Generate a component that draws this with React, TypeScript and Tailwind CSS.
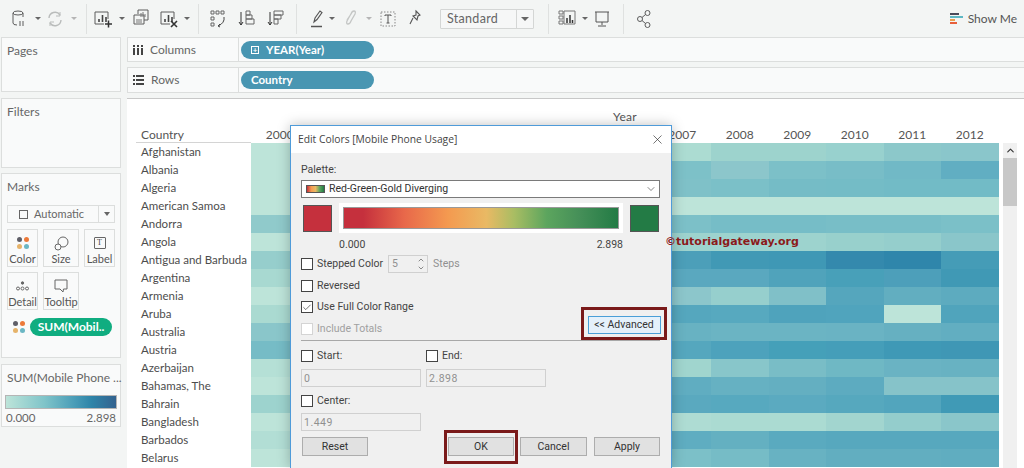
import { X, ChevronDown, ChevronUp, Check } from 'lucide-react';

const rows: [string, string, string[]][] = [
  ['Afghanistan', '#bde4d9', ['#acdcd2', '#9dd3cd', '#9dd3cd', '#98d1ce', '#8cc8ca', '#8ac6cb']],
  ['Albania', '#bde4d9', ['#7dc1c8', '#8cc6cb', '#7cc0c8', '#78bdc7', '#71b9c6', '#61aec2']],
  ['Algeria', '#bde4d9', ['#7fc1c8', '#7bc0c8', '#75bcc6', '#74bcc6', '#72bbc6', '#72bbc6']],
  ['American Samoa', '#bde4d9', ['#bde4d9', '#bde4d9', '#bde4d9', '#bde4d9', '#bde4d9', '#bde4d9']],
  ['Andorra', '#90cacb', ['#7cc0c8', '#76bdc7', '#76bdc7', '#78bec7', '#78bec7', '#7bc0c8']],
  ['Angola', '#bde4d9', ['#9dd3ce', '#9dd3ce', '#9dd3ce', '#98d0cc', '#95cecc', '#8ac6ca']],
  ['Antigua and Barbuda', '#96cecc', ['#4c9fb9', '#4199b5', '#3f98b5', '#3489ad', '#2f86ab', '#459cb7']],
  ['Argentina', '#a8d9d1', ['#5aa8bf', '#5aa8bf', '#50a3bb', '#48a0b9', '#4d9fba', '#4099b5']],
  ['Armenia', '#bde4d9', ['#8cc6cb', '#96cfcd', '#80c0c8', '#55a6bd', '#62aec0', '#5dabbf']],
  ['Aruba', '#aadad1', ['#55a7be', '#57a9bf', '#4fa3bc', '#50a4bd', '#bde4d9', '#50a4bc']],
  ['Australia', '#8ac6ca', ['#68b2c2', '#6bb4c3', '#6bb4c3', '#6ab3c3', '#66b0c1', '#62aec1']],
  ['Austria', '#76bcc6', ['#55a7be', '#4da2bc', '#45a0b9', '#459eb9', '#3f99b6', '#3f97b5']],
  ['Azerbaijan', '#b5e0d6', ['#a0d5ce', '#88c6ca', '#79bdc6', '#6fb8c4', '#6ab3c3', '#68b2c2']],
  ['Bahamas, The', '#bde4d9', ['#60adc1', '#66b1c2', '#64afc1', '#5dabc0', '#86c3c9', '#86c3c9']],
  ['Bahrain', '#9dd3ce', ['#5aa9bf', '#57a9bf', '#5baac0', '#56a8be', '#52a5bd', '#409ab6']],
  ['Bangladesh', '#bde4d9', ['#aedcd3', '#abdbd2', '#abdbd2', '#a2d5cf', '#94cdcc', '#8ac6ca']],
  ['Barbados', '#b2ded5', ['#5fadc1', '#64b0c1', '#5aaabf', '#57a8be', '#57a8be', '#57a8be']],
  ['Belarus', '#bde4d9', ['#7cc0c8', '#76bcc6', '#68b2c2', '#62aec0', '#62aec0', '#60adc0']],
];

// years behind the dialog stay empty
const years = ['2000', '', '', '', '', '', '', '2007', '2008', '2009', '2010', '2011', '2012'];

function Caret({ className = '' }: { className?: string }) {
  return <span className={`w-0 h-0 border-x-[3px] border-x-transparent border-t-[3px] border-t-[#666] ${className}`} />;
}

function Sep({ className = '' }: { className?: string }) {
  return <span className={`w-px h-[30px] bg-[#dfe1e0] ${className}`} />;
}

function Icon({ w, className = '', children }: { w: number; className?: string; children: React.ReactNode }) {
  return (
    <svg width={w} height="20" viewBox={`0 0 ${w} 20`} fill="none" stroke="#5c5c5c" strokeWidth="1" className={className}>
      {children}
    </svg>
  );
}

function ChartBars() {
  return <path d="M5 13V10M8.5 13V6M12 13V8" strokeWidth="1.6" stroke="#444" />;
}

function Toolbar() {
  return (
    <div className="h-[37px] shrink-0 flex items-center">
      <Icon w={14} className="ml-[12px]">
        <ellipse cx="6" cy="4" rx="5" ry="2" />
        <path d="M1 4v10q0 2 4 2M11 4v4M8 12v5M11 12v5" />
      </Icon>
      <Caret className="ml-[9px]" />
      <Icon w={16} className="ml-[6px]">
        <path d="M2 9a6 6 0 0 1 11-3M14 11a6 6 0 0 1-11 3" stroke="#b9bcbb" strokeWidth="1.4" />
        <path d="M13 3v4h-4M3 17v-4h4" stroke="#b9bcbb" />
      </Icon>
      <Caret className="ml-[8px] border-t-[#b5b5b5]" />
      <Sep className="ml-[9px]" />
      <Icon w={19} className="ml-[7px]">
        <path d="M10 15H1V3h13v7" />
        <ChartBars />
        <path d="M11 15h7M14.5 11.500v7" stroke="#333" strokeWidth="1.5" />
      </Icon>
      <Caret className="ml-[6px]" />
      <Icon w={16} className="ml-[8px]">
        <path d="M5 5V1h10v10h-4" />
        <path d="M1 6h10v9H1z" />
        <path d="M8 8V4M10 8V3M12 8V5M3 11h6M3 13h6" stroke="#777" />
      </Icon>
      <Icon w={18} className="ml-[11px]">
        <path d="M10 15H1V3h13v7" />
        <ChartBars />
        <path d="M11 12l6 6M17 12l-6 6" stroke="#333" strokeWidth="1.6" />
      </Icon>
      <Caret className="ml-[6px]" />
      <Sep className="ml-[8px]" />
      <Icon w={16} className="ml-[11px]">
        <path d="M1 2h3v3H1zM6 2h3v3H6zM11 2h3v3h-3zM1 8h3v3H1zM1 14h3v3H1z" stroke="#666" />
        <path d="M14 8q1 6-6 9M8 17l2-2M8 17l2 1" stroke="#444" />
      </Icon>
      <Icon w={17} className="ml-[12px]">
        <path d="M3 3v13M1 13l2 3 2-3" stroke="#333" />
        <path d="M8 2h4v4H8zM8 6h6v4H8zM8 10h8v5H8z" stroke="#666" />
      </Icon>
      <Icon w={17} className="ml-[12px]">
        <path d="M3 3v13M1 13l2 3 2-3" stroke="#333" />
        <path d="M7 2h9v4H7zM7 6h7v4H7zM7 10h4v5H7z" stroke="#666" />
      </Icon>
      <Sep className="ml-[12px]" />
      <Icon w={12} className="ml-[14px]">
        <path d="M3 13l1-4 5-7 2 1.500-5 7z" stroke="#555" strokeWidth="1.100" />
        <path d="M0 17.500h11" stroke="#555" strokeWidth="1.500" />
      </Icon>
      <Caret className="ml-[6px]" />
      <Icon w={13} className="ml-[8px]">
        <path d="M9 3l-5 9q-1 3 1 3t3-3l4-7q1-3-1-3t-3 3L4 11" stroke="#c4c6c5" strokeWidth="1.300" />
      </Icon>
      <Caret className="ml-[10px] border-t-[#b5b5b5]" />
      <Icon w={16} className="ml-[8px]">
        <path d="M1 3h14v14H1z" strokeDasharray="1.500 1.500" stroke="#888" />
        <path d="M5 7V6h6v1M8 6v8M6.500 14h3" stroke="#555" />
      </Icon>
      <Icon w={13} className="ml-[13px]">
        <path d="M7 2l4 4-2 1-1 4-4-4 3-1zM4 9l-3 6" stroke="#555" strokeWidth="1.100" />
      </Icon>
      <div className="ml-[18px] w-[94px] h-[20px] flex border border-[#d4d6d5] bg-[#f6f7f7] rounded-[1px] text-[12.500px] text-[#666] tracking-[0.3px]">
        <span className="flex-1 pl-[6px] leading-[18px]">Standard</span>
        <span className="w-[17px] border-l border-[#d4d6d5] flex items-center justify-center">
          <Caret className="border-x-[4px] border-t-[4px]" />
        </span>
      </div>
      <Sep className="ml-[14px]" />
      <Icon w={18} className="ml-[9px]">
        <path d="M1 2h4v3H1zM1 7h4v3H1zM1 12h4v3H1zM6 2h11v13H6z" stroke="#777" />
        <path d="M9 14V9M12 14V6M14.500 14v-3" stroke="#333" strokeWidth="1.500" />
      </Icon>
      <Caret className="ml-[6px]" />
      <Icon w={16} className="ml-[6px]">
        <path d="M1 3h14M2 3v10h12V3M8 13v3M4 17h8" stroke="#555" />
      </Icon>
      <Sep className="ml-[13px]" />
      <Icon w={14} className="ml-[13px]">
        <circle cx="3" cy="10" r="2.500" />
        <circle cx="10.500" cy="4" r="2.500" />
        <circle cx="10.500" cy="16" r="2.500" />
        <path d="M5 8.500l3.500-3M5 11.500l3.500 3" />
      </Icon>
      <div className="ml-auto mr-[7px] flex items-center gap-[5px] text-[#555]">
        <div className="flex flex-col gap-[1px] w-[13px]">
          <span className="h-[2px] w-[9px] bg-[#4a4a5a]" />
          <span className="h-[2px] w-[13px] bg-[#5eb8c4]" />
          <span className="h-[2px] w-[5px] bg-[#e9a04f]" />
          <span className="h-[2px] w-[7px] bg-[#e8603c]" />
        </div>
        <span className="text-[12px]">Show Me</span>
      </div>
    </div>
  );
}

function SideCard({ title, className = '', children }: { title: string; className?: string; children?: React.ReactNode }) {
  return (
    <div className={`w-[120px] ml-px border border-[#dcdedd] bg-[#f9fafa] ${className}`}>
      <div className="pl-[5px] pt-[5px] text-[12px] leading-[16px] text-[#666] whitespace-nowrap">{title}</div>
      {children}
    </div>
  );
}

function Tile({ label, w, children }: { label: string; w: string; children: React.ReactNode }) {
  return (
    <div className={`${w} h-[38px] border border-[#dcdedd] flex flex-col items-center pt-[4px]`}>
      <div className="h-[18px] flex items-center justify-center">{children}</div>
      <span className="text-[11px] leading-[14px] text-[#555]">{label}</span>
    </div>
  );
}

function ColorDots() {
  return (
    <div className="grid grid-cols-2 gap-[2px] w-[12px]">
      <span className="size-[5px] rounded-full bg-[#5f5f68]" />
      <span className="size-[5px] rounded-full bg-[#ec7a3a]" />
      <span className="size-[5px] rounded-full bg-[#e6b36a]" />
      <span className="size-[5px] rounded-full bg-[#6bb7c4]" />
    </div>
  );
}

function Sidebar() {
  return (
    <div className="w-[127px] shrink-0 flex flex-col">
      <SideCard title="Pages" className="h-[55px]" />
      <SideCard title="Filters" className="h-[70px] mt-[6px]" />
      <SideCard title="Marks" className="h-[185px] mt-[5px]">
        <div className="mx-[5px] mt-[10px] h-[18px] border border-[#dcdedd] flex text-[11px] text-[#666]">
          <div className="w-[90px] flex items-center pl-[11px] gap-[6px]">
            <span className="size-[9px] border border-[#666]" />
            <span>Automatic</span>
          </div>
          <div className="flex-1 border-l border-[#dcdedd] flex items-center justify-center">
            <Caret className="border-x-[3.500px] border-t-[4px]" />
          </div>
        </div>
        <div className="mx-[5px] mt-[6px] flex gap-[5px]">
          <Tile label="Color" w="w-[31px]"><ColorDots /></Tile>
          <Tile label="Size" w="w-[36px]">
            <svg width="15" height="15" viewBox="0 0 15 15" fill="none" stroke="#666">
              <circle cx="9" cy="6" r="5" fill="#f9fafa" />
              <circle cx="4" cy="11" r="3" fill="#f9fafa" />
            </svg>
          </Tile>
          <Tile label="Label" w="w-[31px]">
            <span className="size-[12px] border border-[#666] rounded-[1px] flex items-center justify-center text-[8px] font-['Liberation_Serif',serif] text-[#444]">T</span>
          </Tile>
        </div>
        <div className="mx-[5px] mt-[5px] flex gap-[5px]">
          <Tile label="Detail" w="w-[31px]">
            <svg width="13" height="10" viewBox="0 0 13 10" fill="none" stroke="#666">
              <circle cx="6.500" cy="2" r="1.200" fill="#666" />
              <circle cx="2" cy="7.500" r="1.500" />
              <circle cx="6.500" cy="7.500" r="1.500" />
              <circle cx="11" cy="7.500" r="1.500" />
            </svg>
          </Tile>
          <Tile label="Tooltip" w="w-[36px]">
            <svg width="14" height="14" viewBox="0 0 14 14" fill="none" stroke="#666">
              <path d="M1 1h12v9H9.500L9 13l-3-3H1z" />
            </svg>
          </Tile>
        </div>
        <div className="ml-[11px] mt-[8px] flex items-center gap-[5px]">
          <ColorDots />
          <div className="w-[82px] h-[18px] rounded-full bg-[#10ad80] text-white text-[12px] font-bold text-center leading-[18px]">SUM(Mobil..</div>
        </div>
      </SideCard>
      <SideCard title="SUM(Mobile Phone ..." className="h-[63px] mt-[6px]">
        <div className="mx-[3px] mt-[9px] h-[14px] border border-[#b5b5b5] bg-[linear-gradient(to_right,#bde4d9,#7fc4c9_35%,#4a9db8_62%,#2e84a8_78%,#33628f)]" />
        <div className="mx-[4px] mt-[2px] flex justify-between text-[11.500px] leading-[14px] text-[#666]">
          <span>0.000</span>
          <span>2.898</span>
        </div>
      </SideCard>
    </div>
  );
}

function Shelf({ label, pill, icon, plus, className = '' }: { label: string; pill: string; icon: React.ReactNode; plus?: boolean; className?: string }) {
  return (
    <div className={`border border-[#dcdedd] border-r-0 bg-[#f9fafa] flex ${className}`}>
      <div className="w-[111px] border-r border-[#dcdedd] flex items-center pl-[5px] gap-[7px] text-[12px] text-[#666]">
        {icon}
        <span>{label}</span>
      </div>
      <div className="ml-[2px] my-auto w-[133px] h-[18px] rounded-full bg-[#4996b2] flex items-center pl-[10px] gap-[7px] text-white text-[11.500px] font-bold">
        {plus && (
          <span className="size-[8px] border border-white flex items-center justify-center text-[8px] leading-none">+</span>
        )}
        <span>{pill}</span>
      </div>
    </div>
  );
}

function Viz() {
  return (
    <div className="flex-1 mt-[5px] border-t border-[#c8c8c8] bg-white pt-[9px] pl-[9px] flex">
      <div className="w-[863px] shrink-0">
        <div className="ml-[115px] w-[748px] h-[17px] text-center text-[12px] leading-[17px] text-[#555] tracking-[0.3px]">Year</div>
        <div className="h-[18px] flex text-[12px] leading-[19px] text-[#555]">
          <div className="w-[115px] pl-[5px] border-b border-[#d4d4d4]">Country</div>
          <div className="grid grid-cols-[repeat(13,57.500px)] text-center">
            {years.map((y, i) => <span key={i}>{y}</span>)}
          </div>
        </div>
        {rows.map(([name, first, last]) => (
          <div key={name} className="h-[18px] flex">
            <div className="w-[115px] pl-[5px] text-[11.500px] leading-[18px] text-[#4d4d4d] whitespace-nowrap">{name}</div>
            <div className="grid grid-cols-[repeat(13,57.500px)]">
              {Array.from({ length: 7 }).map((_, i) => <span key={i} style={{ background: first }} />)}
              {last.map((c, i) => <span key={i} style={{ background: c }} />)}
            </div>
          </div>
        ))}
      </div>
      <div className="ml-[4px] mt-[35px] w-[14px] h-[325px] bg-[#f0f0f0] flex flex-col">
        <ChevronUp size={11} strokeWidth={2.500} className="mx-auto mt-[2px] text-[#333]" />
        <div className="mt-[2px] h-[48px] bg-[#c8c8c8]" />
      </div>
    </div>
  );
}

function CheckRow({ label, checked, disabled, className = '' }: { label: string; checked?: boolean; disabled?: boolean; className?: string }) {
  return (
    <div className={`flex items-center gap-[4px] h-[12px] ${disabled ? 'text-[#a0a0a0]' : 'text-[#444]'} ${className}`}>
      <span className={`size-[12px] border bg-white flex items-center justify-center ${disabled ? 'border-[#d4d4d4]' : 'border-[#444]'}`}>
        {checked && <Check size={11} strokeWidth={1.500} className="text-[#222]" />}
      </span>
      <span>{label}</span>
    </div>
  );
}

function ValueBox({ value, className = '' }: { value: string; className?: string }) {
  return <div className={`w-[120px] h-[18px] border border-[#d0d0d0] pl-[2px] leading-[17px] text-[#909090] tracking-[0.5px] ${className}`}>{value}</div>;
}

function Btn({ label, w, className = '' }: { label: string; w: string; className?: string }) {
  return <div className={`${w} h-[19px] bg-[#e1e1e1] border border-[#adadad] text-center leading-[17px] text-[#333] ${className}`}>{label}</div>;
}

function EditColors() {
  return (
    <div className="absolute left-[290px] top-[125px] w-[382px] h-[343px] border border-b-0 border-[#4f9bd9] bg-[#f0f0f0] text-[10.500px] font-['Roboto',sans-serif] shadow-[0_0_12px_rgba(0,0,0,0.25)]">
      <div className="h-[27px] bg-white flex items-center justify-between pl-[7px] pr-[6px] text-[#444] font-['Open_Sans',sans-serif] text-[10.300px]">
        <span>Edit Colors [Mobile Phone Usage]</span>
        <X size={15} strokeWidth={1} className="text-[#222]" />
      </div>
      <div className="pl-[10px] pt-[10px] leading-[14px] text-[#444]">Palette:</div>
      <div className="ml-[10px] mt-[3px] w-[359px] h-[18px] border border-[#7a7a7a] bg-white flex items-center pl-[4px] pr-[2px] text-[#333]">
        <span className="w-[19px] h-[8px] border border-[#555] bg-[linear-gradient(to_right,#c5303d,#f49a50,#e9b964,#5ca55e,#237b45)]" />
        <span className="ml-[4px] flex-1">Red-Green-Gold Diverging</span>
        <ChevronDown size={12} strokeWidth={1.200} className="text-[#333]" />
      </div>
      <div className="mt-[5px] ml-[12px] flex items-center">
        <div className="w-[29px] h-[27px] bg-[#c5303d] border border-[#555]" />
        <div className="ml-[7px] w-[284px] h-[30px] bg-white p-[4px]">
          <div className="h-full border border-[#999] bg-[linear-gradient(to_right,#c5303d_7%,#e8684a_22%,#f49a50_38%,#e9b964_52%,#a9bd63_62%,#5ca55e_74%,#458f58_86%,#237b45)]" />
        </div>
        <div className="ml-[7px] w-[29px] h-[27px] bg-[#237b45] border border-[#555]" />
      </div>
      <div className="ml-[48px] mt-[5px] w-[284px] flex justify-between leading-[14px] text-[#444]">
        <span>0.000</span>
        <span>2.898</span>
      </div>
      <div className="mt-[3px] ml-[10px] h-[18px] flex items-center">
        <CheckRow label="Stepped Color" className="w-[87px]" />
        <div className="w-[40px] h-[18px] border border-[#d0d0d0] flex items-center justify-between pl-[3px] pr-[2px] text-[#909090]">
          <span>5</span>
          <div className="flex flex-col">
            <ChevronUp size={8} strokeWidth={2} className="text-[#555]" />
            <ChevronDown size={8} strokeWidth={2} className="text-[#555]" />
          </div>
        </div>
        <span className="ml-[5px] text-[#909090]">Steps</span>
      </div>
      <CheckRow label="Reversed" className="ml-[10px] mt-[7px]" />
      <div className="relative">
        <CheckRow label="Use Full Color Range" checked className="ml-[10px] mt-[9px]" />
        <CheckRow label="Include Totals" disabled className="ml-[10px] mt-[10px]" />
        <div className="absolute left-[290px] top-[6px] w-[86px] h-[33px] border-[3px] border-[#7a1a1a] flex justify-center">
          <div className="mt-[6px] w-[73px] h-[18px] bg-[#e5f1fb] border border-[#4a9fd8] text-center leading-[16px] text-[#333]">&lt;&lt; Advanced</div>
        </div>
      </div>
      <div className="ml-[10px] mt-[5px] w-[359px] h-px bg-[#a8a8a8]" />
      <div className="ml-[10px] mt-[9px] flex">
        <CheckRow label="Start:" className="w-[125px]" />
        <CheckRow label="End:" />
      </div>
      <div className="ml-[10px] mt-[7px] flex gap-[5px]">
        <ValueBox value="0" />
        <ValueBox value="2.898" />
      </div>
      <CheckRow label="Center:" className="ml-[10px] mt-[8px]" />
      <ValueBox value="1.449" className="ml-[10px] mt-[6px]" />
      <div className="relative ml-[11px] mt-[6px] flex">
        <Btn label="Reset" w="w-[66px]" />
        <Btn label="OK" w="w-[66px]" className="ml-[80px]" />
        <Btn label="Cancel" w="w-[67px]" className="ml-[6px]" />
        <Btn label="Apply" w="w-[66px]" className="ml-[7px]" />
        <div className="absolute left-[142px] top-[-7px] w-[74px] h-[34px] border-[3px] border-[#7a1a1a]" />
      </div>
    </div>
  );
}

export default function App() {
  return (
    <div className="relative w-[1024px] h-[468px] overflow-hidden flex flex-col bg-[#f3f5f4] font-['Lato',sans-serif]">
      <Toolbar />
      <div className="flex-1 flex min-h-0">
        <Sidebar />
        <div className="flex-1 flex flex-col min-w-0">
          <Shelf
            label="Columns"
            pill="YEAR(Year)"
            plus
            className="h-[25px]"
            icon={
              <svg width="10" height="10" viewBox="0 0 10 10" fill="#444">
                <path d="M0 3h2v7H0zM4 3h2v7H4zM8 3h2v7H8zM0 0h2v2H0zM4 0h2v2H4zM8 0h2v2H8z" />
              </svg>
            }
          />
          <Shelf
            label="Rows"
            pill="Country"
            className="h-[26px] mt-[5px]"
            icon={
              <svg width="11" height="10" viewBox="0 0 11 10" fill="#444">
                <path d="M0 0h2v2H0zM3 0h8v2H3zM0 4h2v2H0zM3 4h8v2H3zM0 8h2v2H0zM3 8h8v2H3z" />
              </svg>
            }
          />
          <Viz />
        </div>
      </div>
      <EditColors />
      <div className="absolute left-[665px] top-[233px] text-[11px] leading-[18px] font-bold text-[#8b1a1a] font-['DejaVu_Sans',sans-serif]">©tutorialgateway.org</div>
    </div>
  );
}
